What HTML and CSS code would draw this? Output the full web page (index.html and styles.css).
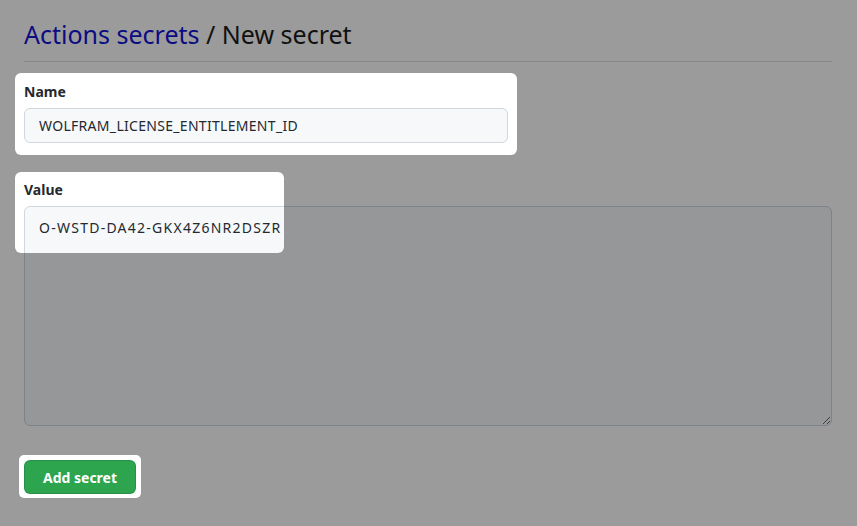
FILE: index.html
```html
<!DOCTYPE html>
<html lang="en">
<head>
<meta charset="utf-8">
<title>New secret</title>
<link rel="stylesheet" href="styles.css">
</head>
<body>
<main class="page">
  <header class="subhead">
    <h1 class="subhead-title"><a class="crumb-link" href="#">Actions secrets</a> / New secret</h1>
  </header>
  <form class="secret-form">
    <div class="form-group">
      <label class="form-label" for="name">Name</label>
      <input class="form-input name-input" id="name" type="text" value="WOLFRAM_LICENSE_ENTITLEMENT_ID">
    </div>
    <div class="form-group value-group">
      <label class="form-label" for="value">Value</label>
      <textarea class="form-input value-input" id="value">O-WSTD-DA42-GKX4Z6NR2DSZR</textarea>
    </div>
    <div class="form-actions">
      <button class="btn-primary" type="button">Add secret</button>
    </div>
  </form>
</main>
<svg class="dim-overlay" width="857" height="526" viewBox="0 0 857 526" aria-hidden="true">
  <defs>
    <mask id="spotlights">
      <rect x="0" y="0" width="857" height="526" fill="#fff"/>
      <rect x="15" y="73" width="502" height="82" rx="6" fill="#000"/>
      <rect x="15" y="172" width="269" height="81" rx="6" fill="#000"/>
      <rect x="19" y="455" width="122" height="43" rx="5" fill="#000"/>
    </mask>
  </defs>
  <rect x="0" y="0" width="857" height="526" fill="rgba(0,0,0,0.392)" mask="url(#spotlights)"/>
</svg>
</body>
</html>
```

FILE: styles.css
```css
html, body {
  margin: 0;
  padding: 0;
  background: #ffffff;
  overflow: hidden;
}

body {
  font-family: "Noto Sans", "Open Sans", sans-serif;
  color: #24292f;
  width: 857px;
  height: 526px;
}

.page {
  padding: 0 25px 0 24px;
}

.subhead {
  padding-top: 16px;
  padding-bottom: 9px;
  border-bottom: 1px solid #d8dee4;
}

.subhead-title {
  margin: 0;
  font-size: 25px;
  font-weight: 400;
  line-height: 36px;
  color: #1b1d20;
}

.crumb-link {
  color: #1313d6;
  text-decoration: none;
}

.secret-form {
  display: flex;
  flex-direction: column;
  padding-top: 20px;
}

.form-group {
  display: flex;
  flex-direction: column;
  align-items: flex-start;
}

.value-group {
  margin-top: 37px;
}

.form-label {
  font-size: 14px;
  font-weight: 700;
  line-height: 20px;
  margin-bottom: 6px;
  color: #24292f;
}

.form-input {
  box-sizing: border-box;
  font-family: "Noto Sans", "Open Sans", sans-serif;
  font-size: 14px;
  line-height: 20px;
  color: #24292f;
  background: #f6f8fa;
  border: 1px solid #d0d7de;
  border-radius: 6px;
  outline: none;
  margin: 0;
}

.name-input {
  width: 484px;
  height: 35px;
  padding: 0 14px;
  letter-spacing: 0.3px;
}

.value-input {
  width: 808px;
  height: 220px;
  padding: 11px 14px;
  resize: vertical;
  display: block;
  letter-spacing: 1.25px;
}

.form-actions {
  margin-top: 34px;
}

.btn-primary {
  box-sizing: border-box;
  width: 112px;
  height: 34px;
  font-family: "Noto Sans", "Open Sans", sans-serif;
  font-size: 14px;
  font-weight: 700;
  color: #ffffff;
  background: #2da44e;
  border: 1px solid rgba(27, 31, 36, 0.15);
  border-radius: 6px;
  padding: 0 16px;
  cursor: pointer;
}

.dim-overlay {
  position: fixed;
  left: 0;
  top: 0;
  pointer-events: none;
}
```
